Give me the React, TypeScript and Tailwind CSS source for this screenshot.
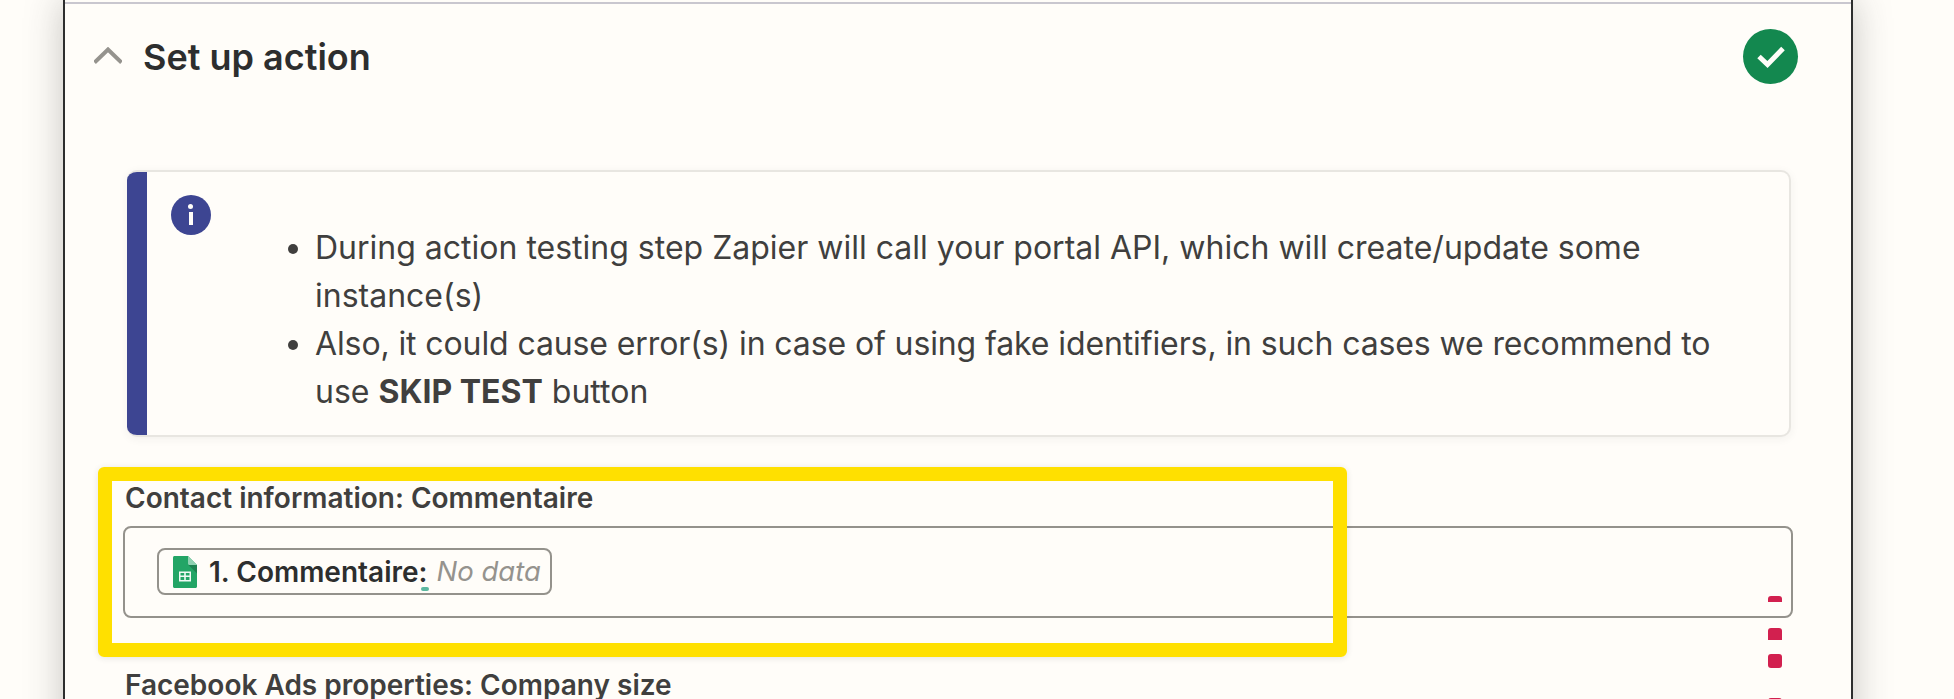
const font = "font-['Inter','Noto_Sans',sans-serif]";

function SheetsIcon() {
  return (
    <svg width="24" height="32" viewBox="0 0 24 32" className="shrink-0">
      <path d="M1.5 0H15L24 9V30.5C24 31.3 23.3 32 22.5 32H1.5C0.7 32 0 31.3 0 30.5V1.5C0 0.7 0.7 0 1.5 0Z" fill="#23a566" />
      <path d="M15 0L24 9H16.5C15.7 9 15 8.3 15 7.5V0Z" fill="#8ed1b1" />
      <path d="M15.5 9L24 17.5V9H15.5Z" fill="#1c8150" />
      <path d="M6 15.5H18V25.5H6V15.5ZM7.5 17V19.5H11.2V17H7.5ZM12.8 17V19.5H16.5V17H12.8ZM7.5 21V24H11.2V21H7.5ZM12.8 21V24H16.5V21H12.8Z" fill="#f1faf5" fillRule="evenodd" />
    </svg>
  );
}

export default function App() {
  return (
    <div className={`${font} relative h-[699px] w-[1954px] overflow-hidden bg-[#fffdf9] text-[#403f3e]`}>
      <div className="relative ml-[63px] h-[760px] w-[1790px] border-x-2 border-[#2d2e2e] bg-[#fffdf9] pt-[2px] shadow-[0_0_36px_rgba(45,46,46,0.28)]">
        <div className="h-[2px] bg-[#c9c7cf]" />

        {/* Header */}
        <div className="flex h-[105px] items-center justify-between pl-[29px] pr-[53px]">
          <div className="flex items-center gap-[21px]">
            <svg width="28" height="17" viewBox="0 0 28 17" fill="none" className="-mt-[2px]">
              <path d="M0.5 15.5L14 2.5L27.5 15.5" stroke="#95938e" strokeWidth="4" />
            </svg>
            <h2 className="mt-[1px] text-[36px] font-semibold leading-[40px] text-[#2d2e2e]">Set up action</h2>
          </div>
          <div className="flex h-[55px] w-[55px] items-center justify-center rounded-full bg-[#13884f]">
            <svg width="30" height="24" viewBox="0 0 30 24" fill="none">
              <path d="M3 11.5L11.5 19.5L27 3.5" stroke="#fffdf9" strokeWidth="5" />
            </svg>
          </div>
        </div>

        {/* Info box */}
        <div className="ml-[62px] mt-[61px] flex h-[267px] w-[1664px] overflow-hidden rounded-[10px] border-2 border-l-0 border-[#e8e6e1] bg-[#fffdf9] shadow-[0_2px_10px_rgba(45,46,46,0.06)]">
          <div className="w-[20px] shrink-0 bg-[#3d4592]" />
          <div className="flex pl-[24px] pt-[23px]">
            <div className="relative h-[40px] w-[40px] shrink-0 rounded-full bg-[#3d4592]">
              <div className="absolute left-[17px] top-[9px] h-[5px] w-[5px] rounded-full bg-[#fffdf9]" />
              <div className="absolute left-[18px] top-[17px] h-[13px] w-[4px] bg-[#fffdf9]" />
            </div>
            <ul className="ml-[104px] mt-[29px] w-[1420px] list-disc pl-0 text-[32px] leading-[48px] marker:text-[#403f3e]">
              <li>During action testing step Zapier will call your portal API, which will create/update some instance(s)</li>
              <li>
                <span className="tracking-[-0.11px]">Also, it could cause error(s) in case of using fake identifiers, in such cases we recommend to</span> use{" "}
                <strong className="font-bold">SKIP TEST</strong> button
              </li>
            </ul>
          </div>
        </div>

        {/* Contact field */}
        <label className="ml-[60px] mt-[45px] block text-[28px] font-semibold leading-[32px]">Contact information: Commentaire</label>
        <div className="ml-[58px] mt-[12px] flex h-[92px] w-[1670px] items-start rounded-[8px] border-2 border-[#94928c] pl-[32px] pt-[20px]">
          <div className="flex h-[47px] items-center rounded-[8px] border-2 border-[#94928c] pl-[14px] pr-[9px]">
            <SheetsIcon />
            <span className="ml-[12px] text-[28px] font-semibold text-[#2d2e2e]">1. Commentaire:</span>
            <em className="ml-[9px] text-[27.5px] text-[#95938e]">No data</em>
          </div>
        </div>

        <label className="ml-[60px] mt-[51px] block text-[28px] font-semibold leading-[32px]">Facebook Ads properties: Company size</label>

        {/* Overlays */}
        <div className="absolute left-[33px] top-[467px] h-[190px] w-[1249px] rounded-[6px] border-[14px] border-[#ffe000] shadow-[0_1px_6px_rgba(45,46,46,0.12)]" />
        <div className="absolute left-[356px] top-[587px] h-[4px] w-[8px] rounded-full bg-[#5cb8a0]" />
        <div className="absolute left-[1703px] top-[596px] h-[6px] w-[14px] rounded-t-[3px] bg-[#d2204f]" />
        <div className="absolute left-[1703px] top-[628px] h-[12px] w-[14px] rounded-t-[3px] bg-[#d2204f]" />
        <div className="absolute left-[1703px] top-[654px] h-[14px] w-[14px] rounded-[3px] bg-[#d2204f]" />
        <div className="absolute left-[1703px] top-[698px] h-[6px] w-[14px] rounded-t-[3px] bg-[#d2204f]" />
      </div>
    </div>
  );
}
